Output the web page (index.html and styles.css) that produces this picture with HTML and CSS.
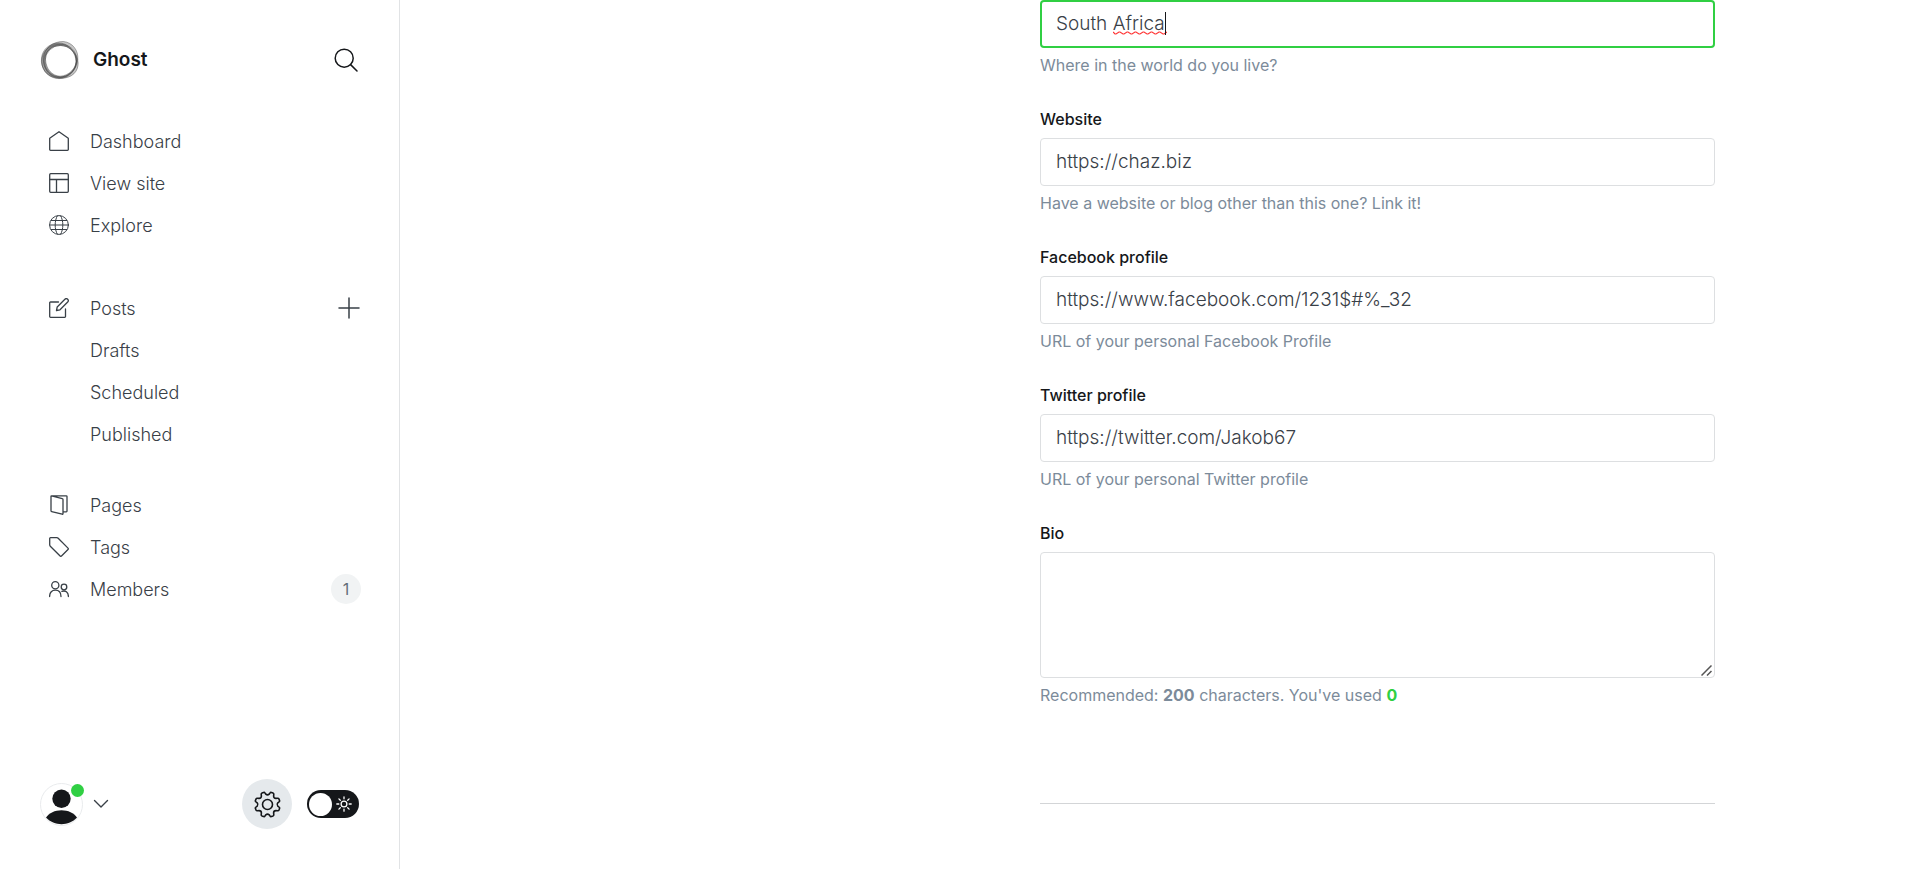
FILE: index.html
```html
<!DOCTYPE html>
<html lang="en">
<head>
<meta charset="utf-8">
<title>Ghost</title>
<link rel="stylesheet" href="styles.css">
</head>
<body>
<div class="app">
  <aside class="sidebar">
    <header class="brand">
      <svg class="brand-logo" viewBox="0 0 40 40" fill="none" aria-hidden="true">
        <g fill="#444" fill-opacity=".3" fill-rule="evenodd" stroke="#333" stroke-opacity=".55" stroke-width=".7">
          <path d="M1.700 21.300a17.300 17.300 0 1 0 34.600 0a17.300 17.300 0 1 0-34.600 0zM5 21.200a15.800 15.800 0 1 0 31.600 0a15.800 15.800 0 1 0-31.600 0z"/>
          <path d="M3.400 17.500C4.500 8 13 1.300 23.500 1.500C33 2.500 38.500 11 37.800 19C37 30 28 38 19 37.800C8 37 2.500 27 3.400 17.500zM5.500 19.500C6 29 12 36 20 36.200C29 36 36.500 28 36.600 19.500C36 10 30 4.600 20.500 4.500C11 5 5.500 11 5.500 19.500z"/>
          <path d="M1.500 18C2.500 9 10 3.200 18.500 3C27 3 33 9 36.500 16C40.500 25 37 34 28.500 37C22 39.500 10 38.500 5 31.500C2 27 1 23 1.500 18zM4 21C4.500 30 11 37 20 37C28 37 35.500 30 36 22C36 12 29 5.500 20 5.500C11 5.500 4.500 12 4 21z"/>
        </g>
      </svg>
      <span class="brand-name">Ghost</span>
      <button class="icon-button search" type="button" aria-label="Search">
        <svg width="24" height="24" viewBox="0 0 24 24" fill="none" stroke="#15171a" stroke-width="1.500" stroke-linecap="round"><circle cx="10.200" cy="10.200" r="9"/><path d="M16.600 16.600 23 23"/></svg>
      </button>
    </header>

    <nav class="nav">
      <ul class="nav-group">
        <li><a class="nav-link" href="#"><svg class="nav-icon" viewBox="0 0 20 20"><path d="M10 .7 19.300 7.200V18.500a.8.8 0 0 1-.8.8H1.500a.8.8 0 0 1-.8-.8V7.200z"/></svg>Dashboard</a></li>
        <li><a class="nav-link" href="#"><svg class="nav-icon" viewBox="0 0 20 20"><rect x=".7" y=".7" width="18.600" height="18.600" rx="1"/><path d="M.7 6.500h18.600M7.500 6.500v12.800"/></svg>View site</a></li>
        <li><a class="nav-link" href="#"><svg class="nav-icon thin" viewBox="0 0 20 20"><circle cx="10" cy="10" r="9.400"/><path d="M.6 10h18.800M2.200 5.500h15.600M2.200 14.500h15.600M8.300.8C5.400 6 5.400 14 8.300 19.200M11.700.8c2.900 5.200 2.900 13.200 0 18.400"/></svg>Explore</a></li>
      </ul>
      <ul class="nav-group posts">
        <li class="nav-row"><a class="nav-link" href="#"><svg class="nav-icon" viewBox="0 0 20 20"><path d="M9.500 4H1.500a.8.8 0 0 0-.8.800v13.700a.8.8 0 0 0 .8.800h14.200a.8.8 0 0 0 .8-.800V11M7.500 12.500l.7-3.500 7.700-7.700a1.900 1.900 0 0 1 2.800 2.700L11 11.800z"/></svg>Posts</a>
          <button class="icon-button plus" type="button" aria-label="New post"><svg width="22" height="22" viewBox="0 0 22 22" stroke="#394047" stroke-width="1.500" stroke-linecap="round"><path d="M11 1v20M1 11h20"/></svg></button></li>
        <li><a class="nav-link sub" href="#">Drafts</a></li>
        <li><a class="nav-link sub" href="#">Scheduled</a></li>
        <li><a class="nav-link sub" href="#">Published</a></li>
      </ul>
      <ul class="nav-group content">
        <li><a class="nav-link" href="#"><svg class="nav-icon" viewBox="0 0 20 20"><path d="M2.500.8h14.800a.7.7 0 0 1 .7.700v14.600a.7.7 0 0 1-.7.700H14M2.500.8 13.300 3.700a.9.9 0 0 1 .7.900v14a.6.6 0 0 1-.8.600L2.700 16.600a.9.9 0 0 1-.7-.9V1.300a.5.500 0 0 1 .5-.5z"/></svg>Pages</a></li>
        <li><a class="nav-link" href="#"><svg class="nav-icon" viewBox="0 0 20 20"><path d="M.7 1.500a.8.8 0 0 1 .8-.8h6.300a2 2 0 0 1 1.400.6l9.800 9.800a1 1 0 0 1 0 1.400l-6.500 6.500a1 1 0 0 1-1.400 0L1.300 9.200A2 2 0 0 1 .7 7.800z"/></svg>Tags</a></li>
        <li class="nav-row"><a class="nav-link" href="#"><svg class="nav-icon" viewBox="0 0 20 20"><circle cx="6.300" cy="6.200" r="3.600"/><path d="M.6 17.500c0-4.200 2.500-6.400 5.700-6.400s5.700 2.200 5.700 6.400"/><circle cx="15" cy="8" r="2.800"/><path d="M12.900 12.400c3.400-1.300 6.500.6 6.500 5.100"/></svg>Members</a><span class="badge">1</span></li>
      </ul>
    </nav>

    <footer class="sidebar-footer">
      <button class="user" type="button" aria-label="Account menu">
        <span class="avatar">
          <svg width="43" height="43" viewBox="0 0 43 43" aria-hidden="true"><circle cx="21.500" cy="21.500" r="21" fill="#fff" stroke="#e9ebed"/><circle cx="21.500" cy="15.800" r="9.200" fill="#15171a"/><path d="M6 34.500C9 30 15 27.200 21.500 27.200S34 30 37 34.500C33 39 27 41.200 21.500 41.200S10 39 6 34.500z" fill="#15171a"/></svg>
          <span class="status"></span>
        </span>
        <svg width="16" height="10" viewBox="0 0 16 10" fill="none" stroke="#394047" stroke-width="1.400" stroke-linecap="round" stroke-linejoin="round"><path d="m1.500 1.500 6.500 6.500 6.500-6.500"/></svg>
      </button>
      <a class="settings" href="#" aria-label="Settings">
        <svg width="27" height="27" viewBox="-13.500 -13.500 27 27" fill="none" stroke="#15171a" stroke-width="1.600" stroke-linejoin="round"><circle r="5"/><path d="M1.700-10.300L2.600-11.600Q3-12.400 3.900-12.100L5.600-11.400Q6.400-11 6.300-10.200L6.100-8.400Q6.100-6.100 8.400-6.100L10.200-6.300Q11-6.400 11.400-5.600L12.100-3.900Q12.400-3 11.600-2.600L10.300-1.700Q8.900 0 10.300 1.700L11.600 2.600Q12.400 3 12.100 3.900L11.400 5.600Q11 6.400 10.200 6.300L8.400 6.100Q6.100 6.100 6.100 8.400L6.300 10.200Q6.400 11 5.600 11.400L3.900 12.100Q3 12.400 2.600 11.600L1.700 10.300Q0 8.900-1.700 10.300L-2.600 11.600Q-3 12.400-3.900 12.100L-5.600 11.400Q-6.400 11-6.300 10.200L-6.100 8.400Q-6.100 6.100-8.400 6.100L-10.200 6.300Q-11 6.400-11.400 5.600L-12.100 3.900Q-12.400 3-11.600 2.600L-10.300 1.700Q-8.900 0-10.300-1.700L-11.600-2.600Q-12.400-3-12.100-3.900L-11.400-5.600Q-11-6.400-10.200-6.300L-8.400-6.100Q-6.100-6.100-6.100-8.400L-6.300-10.200Q-6.400-11-5.600-11.400L-3.900-12.100Q-3-12.400-2.600-11.600L-1.700-10.300Q0-8.900 1.700-10.300z"/></svg>
      </a>
      <button class="toggle" type="button" aria-label="Night shift">
        <span class="knob"></span>
        <svg width="16" height="16" viewBox="0 0 16 16" fill="none" stroke="#fff" stroke-width="1.300" stroke-linecap="round"><circle cx="8" cy="8" r="2.900"/><path d="M8 .8v2M8 13.200v2M.8 8h2M13.200 8h2M2.900 2.900l1.400 1.400M11.700 11.700l1.400 1.400M2.900 13.100l1.400-1.400M11.700 4.300l1.400-1.400"/></svg>
      </button>
    </footer>
  </aside>

  <main class="main">
    <form class="profile">
      <div class="field">
        <div class="input-wrap">
          <input class="input focused" type="text" value="South Africa" aria-label="Location" aria-describedby="location-help">
          <svg class="spelling" width="54" height="24" viewBox="0 0 54 24" fill="none" aria-hidden="true"><path d="M0 20l2 2h1l3-2h1l3 2h1l3-2h1l3 2h1l3-2h1l3 2h1l3-2h1l3 2h1l3-2h1l3 2h1l3-2h1l3 2h1l3-2" stroke="#f33" stroke-width="1.200"/><path d="M52.500 0v23" stroke="#15171a"/></svg>
        </div>
        <p class="help" id="location-help">Where in the world do you live?</p>
      </div>
      <div class="field">
        <label class="label" for="website">Website</label>
        <input class="input" id="website" type="text" value="https://chaz.biz">
        <p class="help">Have a website or blog other than this one? Link it!</p>
      </div>
      <div class="field">
        <label class="label" for="facebook">Facebook profile</label>
        <input class="input" id="facebook" type="text" value="https://www.facebook.com/1231$#%_32">
        <p class="help">URL of your personal Facebook Profile</p>
      </div>
      <div class="field">
        <label class="label" for="twitter">Twitter profile</label>
        <input class="input" id="twitter" type="text" value="https://twitter.com/Jakob67">
        <p class="help">URL of your personal Twitter profile</p>
      </div>
      <div class="field">
        <label class="label" for="bio">Bio</label>
        <div class="input-wrap">
          <textarea class="input bio" id="bio"></textarea>
          <svg class="grip" width="11" height="11" viewBox="0 0 11 11" stroke="#555" stroke-width="1.500" aria-hidden="true"><path d="M.5 10.500l10-10M6 10.500l4.500-4.500"/></svg>
        </div>
        <p class="help">Recommended: <b>200</b> characters. You've used <b class="count">0</b></p>
      </div>
      <hr class="divider">
    </form>
  </main>
</div>
</body>
</html>
```
FILE: styles.css
```css
*, *::before, *::after { box-sizing: border-box; }

body {
  margin: 0;
  background: #fff;
  color: #394047;
  font-family: Inter, "Open Sans", sans-serif;
  font-size: 18px;
}

ul { list-style: none; margin: 0; padding: 0; }
button { border: 0; padding: 0; background: none; font: inherit; cursor: pointer; }
svg { display: block; flex: none; }

.app { display: flex; min-height: 100vh; }

/* Sidebar */
.sidebar {
  display: flex;
  flex: 0 0 400px;
  flex-direction: column;
  padding: 39px 38px 40px 40px;
  border-right: 1px solid #e1e3e5;
}

.brand { display: flex; align-items: center; height: 41px; margin-bottom: 40px; padding-right: 3px; }
.brand-logo { width: 40px; height: 40px; }
.brand-name { margin-left: 13px; color: #15171a; font-size: 19px; font-weight: 600; }
.icon-button { display: flex; }
.search { margin-left: auto; }

.nav-group.posts { margin-top: 41px; }
.nav-group.content { margin-top: 29px; }
.nav-row { display: flex; align-items: center; justify-content: space-between; }
.nav-link {
  display: flex;
  align-items: center;
  gap: 21px;
  height: 42px;
  padding-left: 9px;
  color: #394047;
  font-weight: 300;
  text-decoration: none;
}
.nav-link.sub { padding-left: 50px; }
.nav-icon {
  width: 20px;
  height: 20px;
  fill: none;
  stroke: #394047;
  stroke-width: 1.3;
  stroke-linejoin: round;
  stroke-linecap: round;
}
.nav-icon.thin { stroke-width: 1; }
.plus { margin-right: 1px; }
.badge {
  min-width: 30px;
  border-radius: 15px;
  background: #f1f3f4;
  color: #626d79;
  font-size: 16px;
  line-height: 30px;
  text-align: center;
}

.sidebar-footer { display: flex; align-items: center; margin-top: auto; padding-right: 2px; }
.user { display: flex; align-items: center; gap: 10px; }
.avatar { position: relative; }
.status {
  position: absolute;
  top: 1px;
  right: -1px;
  width: 13px;
  height: 13px;
  border-radius: 50%;
  background: #30cf43;
}
.settings {
  display: flex;
  align-items: center;
  justify-content: center;
  width: 50px;
  height: 50px;
  margin-left: auto;
  border-radius: 50%;
  background: #e5e9ec;
}
.toggle {
  display: flex;
  align-items: center;
  justify-content: space-between;
  width: 52px;
  height: 28px;
  margin-left: 15px;
  padding: 0 7px 0 2px;
  border-radius: 14px;
  background: #15171a;
}
.knob { width: 23px; height: 23px; border-radius: 50%; background: #fff; }

/* Profile form */
.main { flex: 1; padding: 0 205px; }
.profile { max-width: 675px; margin-left: auto; }
.field { margin-bottom: 31px; }
.input-wrap { position: relative; }
.label {
  display: block;
  margin-bottom: 7px;
  color: #15171a;
  font-size: 16px;
  font-weight: 500;
  line-height: 23px;
}
.input {
  display: block;
  width: 100%;
  height: 48px;
  padding: 0 15px 1px;
  border: 1px solid #dddfe1;
  border-radius: 4px;
  outline: 0;
  background: #fff;
  color: #394047;
  font: 300 19px Inter, "Open Sans", sans-serif;
}
.input.focused { padding: 0 14px 1px; border: 2px solid #30cf43; }
.input.bio { height: 126px; resize: vertical; }
.input.bio::-webkit-resizer { background: transparent; }
.spelling { position: absolute; top: 12px; left: 73px; }
.grip { position: absolute; right: 3px; bottom: 2px; pointer-events: none; }
.help { margin: 5px 0 0; color: #7c8b9a; font-size: 16px; font-weight: 400; line-height: 24px; }
.help b { font-weight: 700; }
.help .count { color: #30cf43; }
.divider { margin: 96px 0 0; border: 0; border-top: 1px solid #d3d5d7; }
```
